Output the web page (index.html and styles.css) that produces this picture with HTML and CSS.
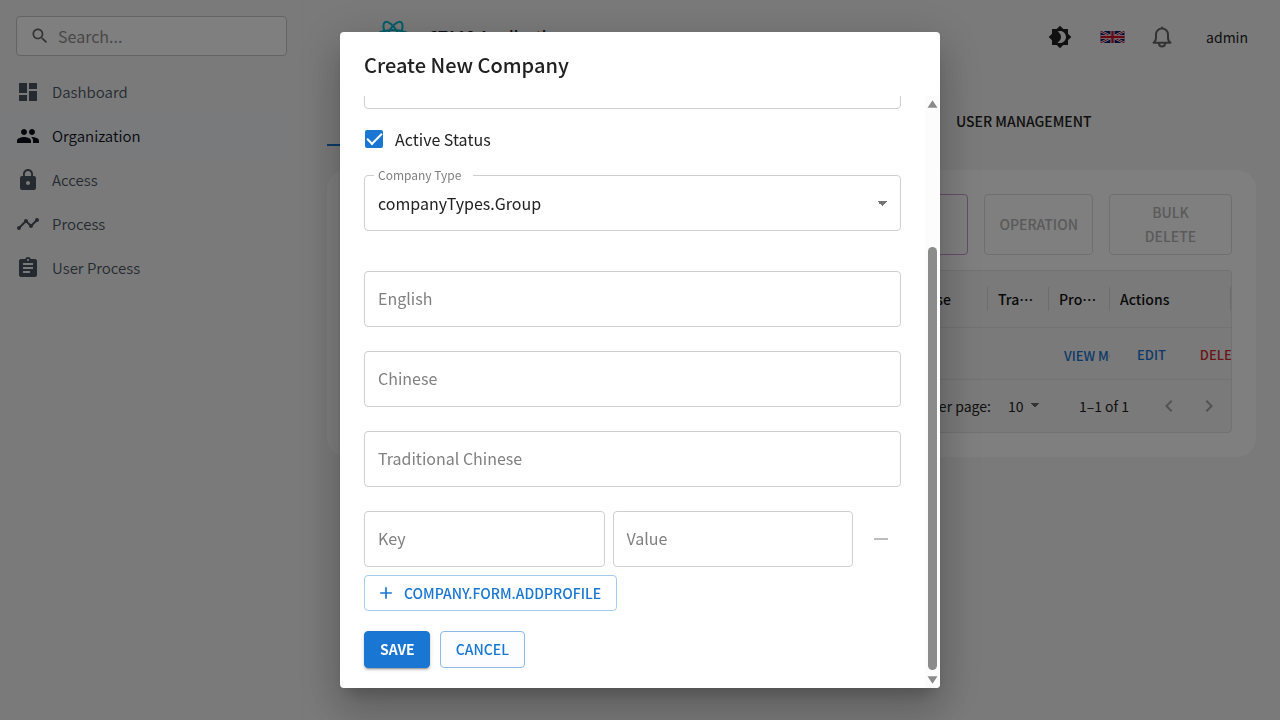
FILE: index.html
```html
<!DOCTYPE html>
<html lang="en">
<head>
<meta charset="utf-8">
<meta name="viewport" content="width=device-width, initial-scale=1">
<title>Organization</title>
<link rel="stylesheet" href="styles.css">
</head>
<body>
<div class="app">
  <aside class="sidebar">
    <label class="search">
      <svg class="search-icon" viewBox="0 0 24 24"><path d="M15.5 14h-.79l-.28-.27C15.41 12.59 16 11.11 16 9.5 16 5.91 13.09 3 9.5 3S3 5.91 3 9.5 5.91 16 9.5 16c1.61 0 3.09-.59 4.23-1.57l.27.28v.79l5 4.99L20.49 19zm-6 0C7.01 14 5 11.99 5 9.5S7.01 5 9.5 5 14 7.01 14 9.5 11.99 14 9.5 14"/></svg>
      <input type="text" placeholder="Search..." aria-label="Search">
    </label>
    <nav class="nav">
      <a class="nav-item" href="#"><svg viewBox="0 0 24 24"><path d="M3 13h8V3H3zm0 8h8v-6H3zm10 0h8V11h-8zm0-18v6h8V3z"/></svg>Dashboard</a>
      <a class="nav-item active" href="#"><svg viewBox="0 0 24 24"><path d="M16 11c1.66 0 2.99-1.34 2.99-3S17.66 5 16 5s-3 1.34-3 3 1.34 3 3 3m-8 0c1.66 0 2.99-1.34 2.99-3S9.66 5 8 5 5 6.34 5 8s1.34 3 3 3m0 2c-2.33 0-7 1.17-7 3.5V19h14v-2.500c0-2.330-4.670-3.500-7-3.500m8 0c-.29 0-.62.02-.97.05 1.160.84 1.970 1.970 1.970 3.450V19h6v-2.500c0-2.330-4.670-3.500-7-3.500"/></svg>Organization</a>
      <a class="nav-item" href="#"><svg viewBox="0 0 24 24"><path d="M18 8h-1V6c0-2.760-2.240-5-5-5S7 3.240 7 6v2H6c-1.100 0-2 .9-2 2v10c0 1.100.9 2 2 2h12c1.100 0 2-.9 2-2V10c0-1.100-.9-2-2-2m-6 9c-1.100 0-2-.9-2-2s.9-2 2-2 2 .9 2 2-.9 2-2 2m3.100-9H8.900V6c0-1.710 1.390-3.100 3.100-3.100s3.100 1.390 3.100 3.100z"/></svg>Access</a>
      <a class="nav-item" href="#"><svg viewBox="0 0 24 24"><path d="M23 8c0 1.100-.9 2-2 2-.18 0-.35-.02-.51-.07l-3.560 3.550c.05.16.07.34.07.52 0 1.100-.9 2-2 2s-2-.9-2-2c0-.18.02-.36.07-.52l-2.550-2.550c-.16.05-.34.07-.52.07s-.36-.02-.52-.07l-4.550 4.560c.05.16.07.33.07.51 0 1.100-.9 2-2 2s-2-.9-2-2 .9-2 2-2c.18 0 .35.02.51.07l4.560-4.550C8.020 9.360 8 9.180 8 9c0-1.100.9-2 2-2s2 .9 2 2c0 .18-.02.36-.07.52l2.550 2.550c.16-.05.34-.07.52-.07s.36.02.52.07l3.550-3.560C19.020 8.350 19 8.180 19 8c0-1.100.9-2 2-2s2 .9 2 2"/></svg>Process</a>
      <a class="nav-item" href="#"><svg viewBox="0 0 24 24"><path d="M19 3h-4.180C14.400 1.840 13.300 1 12 1s-2.400.84-2.820 2H5c-1.100 0-2 .9-2 2v14c0 1.100.9 2 2 2h14c1.100 0 2-.9 2-2V5c0-1.100-.9-2-2-2m-7 0c.55 0 1 .45 1 1s-.45 1-1 1-1-.45-1-1 .45-1 1-1m2 14H7v-2h7zm3-4H7v-2h10zm0-4H7V7h10z"/></svg>User Process</a>
    </nav>
  </aside>
  <main class="main">
    <header class="topbar">
      <div class="brand">
        <svg class="logo" viewBox="0 0 36 32"><g fill="none" stroke="#00bcd4" stroke-width="2"><ellipse cx="18" cy="16" rx="16" ry="6"/><ellipse cx="18" cy="16" rx="16" ry="6" transform="rotate(60 18 16)"/><ellipse cx="18" cy="16" rx="16" ry="6" transform="rotate(120 18 16)"/></g><circle cx="18" cy="16" r="3" fill="#00bcd4"/></svg>
        <span>CTA19 Application</span>
      </div>
      <div class="tools">
        <button class="tool theme" aria-label="Theme"><svg viewBox="0 0 24 24"><path d="M20 8.690V4h-4.690L12 .69 8.690 4H4v4.690L.69 12 4 15.310V20h4.690L12 23.310 15.310 20H20v-4.690L23.310 12zM12 18c-.89 0-1.740-.2-2.500-.55C11.560 16.500 13 14.420 13 12s-1.440-4.500-3.500-5.450C10.260 6.200 11.110 6 12 6c3.310 0 6 2.690 6 6s-2.690 6-6 6" fill-rule="evenodd"/></svg></button>
        <button class="tool" aria-label="Language"><svg class="flag" viewBox="0 0 24 12"><path fill="#012169" d="M0 0h24v12H0z"/><path stroke="#fff" stroke-width="2.400" d="m0 0 24 12M24 0 0 12"/><path stroke="#c8102e" d="m0 0 24 12M24 0 0 12"/><path stroke="#fff" stroke-width="4" d="M12 0v12M0 6h24"/><path stroke="#c8102e" stroke-width="2.400" d="M12 0v12M0 6h24"/></svg></button>
        <button class="tool bell" aria-label="Notifications"><svg viewBox="0 0 24 24"><path d="M3.500 17.800h17c-1.500-1-2.500-2.500-2.500-5V9.500a6 6 0 0 0-12 0v3.300c0 2.500-1 4-2.500 5zM9 18.500a3 3 0 0 0 6 0M12 1.800v2" fill="none" stroke="currentColor" stroke-width="2" stroke-linejoin="round"/></svg></button>
        <span class="user">admin</span>
      </div>
    </header>
    <div class="tabs">
      <button class="tab selected" aria-label="Company"></button>
      <button class="tab">USER MANAGEMENT</button>
    </div>
    <section class="card">
      <div class="actions">
        <button class="action purple" aria-label="Create"></button>
        <button class="action" disabled>OPERATION</button>
        <button class="action bulk" disabled>BULK DELETE</button>
      </div>
      <div class="grid">
        <table>
          <thead><tr><th class="rest"><span>Enterprise</span></th><th lang="zh-CN"><span>Tra…</span></th><th lang="zh-CN"><span>Pro…</span></th><th class="last"><span>Actions</span></th></tr></thead>
          <tbody><tr><td></td><td></td><td class="view"><button class="link">VIEW MORE</button></td><td class="ops"><div><button class="link">EDIT</button><button class="link red">DELETE</button></div></td></tr></tbody>
        </table>
        <div class="pager">
          <label for="rows">Rows per page:</label>
          <select id="rows"><option>10</option></select>
          <span class="range">1–1 of 1</span>
          <button aria-label="Previous page"><svg viewBox="0 0 24 24"><path d="M15.410 7.410 14 6l-6 6 6 6 1.410-1.410L10.830 12z"/></svg></button>
          <button aria-label="Next page"><svg viewBox="0 0 24 24"><path d="M10 6 8.590 7.410 13.170 12l-4.580 4.590L10 18l6-6z"/></svg></button>
        </div>
      </div>
    </section>
  </main>
</div>
<div class="backdrop">
  <div class="dialog" role="dialog" aria-labelledby="dialog-title">
    <h2 id="dialog-title">Create New Company</h2>
    <div class="dialog-body">
      <form class="form">
        <input class="field" type="text" aria-label="Description">
        <label class="check"><input type="checkbox" checked>Active Status</label>
        <fieldset class="select-box">
          <legend><label for="ctype">Company Type</label></legend>
          <select id="ctype"><option>companyTypes.Group</option></select>
        </fieldset>
        <div class="names">
          <input class="field" type="text" placeholder="English" aria-label="English">
          <input class="field" type="text" placeholder="Chinese" aria-label="Chinese">
          <input class="field" type="text" placeholder="Traditional Chinese" aria-label="Traditional Chinese">
        </div>
        <div class="pair">
          <input class="field" type="text" placeholder="Key" aria-label="Key">
          <input class="field" type="text" placeholder="Value" aria-label="Value">
          <button class="remove" type="button" disabled aria-label="Remove"><svg viewBox="0 0 24 24"><path d="M19 13H5v-2h14z"/></svg></button>
        </div>
        <button class="btn add" type="button"><svg viewBox="0 0 24 24"><path d="M19 13h-6v6h-2v-6H5v-2h6V5h2v6h6z"/></svg>COMPANY.FORM.ADDPROFILE</button>
        <div class="buttons">
          <button class="btn save" type="button">SAVE</button>
          <button class="btn cancel" type="button">CANCEL</button>
        </div>
      </form>
      <div class="scrollbar" aria-hidden="true">
        <svg viewBox="0 0 10 8"><path d="M5 1 9 7H1z"/></svg>
        <div class="track"><div class="thumb"></div></div>
        <svg viewBox="0 0 10 8"><path d="M5 7 1 1h8z"/></svg>
      </div>
    </div>
  </div>
</div>
</body>
</html>
```
FILE: styles.css
```css
* { box-sizing: border-box; }
html, body { height: 100%; }
body {
  margin: 0;
  overflow: hidden;
  background: #f5f5f5;
  color: #212121;
  font: 14px/24px "Noto Sans CJK SC", "Noto Sans", sans-serif;
}
button, input, select { font: inherit; color: inherit; margin: 0; }
button { border: 0; background: none; padding: 0; }
svg { fill: currentColor; flex: none; display: block; }

.app { display: flex; height: 100%; }

.sidebar { flex: none; width: 303px; padding: 16px 0 0; border-right: 1px solid #f0f0f0; }
.search {
  display: flex; align-items: center; gap: 8px;
  height: 40px; margin: 0 15px 14px 16px; padding: 0 13px;
  background: #fff; border: 1px solid #c8c8c8; border-radius: 4px;
}
.search-icon { width: 20px; height: 20px; color: #666; }
.search input { flex: 1; min-width: 0; border: 0; padding: 0; background: none; outline: 0; font-size: 16px; }
.search input::placeholder { color: #909090; opacity: 1; }
.nav-item {
  display: flex; align-items: center; gap: 12px;
  height: 44px; margin: 0 12px 0 0; padding: 0 16px;
  color: #4b5563; text-decoration: none; font-size: 15px; font-weight: 350;
}
.nav-item svg { width: 24px; height: 24px; }
.nav-item.active { color: #0b0f19; background: #f3f5f9; }

.main { flex: 1; min-width: 0; padding: 0 24px; }
.topbar { display: flex; align-items: center; justify-content: space-between; height: 74px; padding: 0 8px 0 48px; }
.brand { display: flex; align-items: center; gap: 17px; padding-bottom: 2px; font-size: 16px; font-weight: 500; }
.logo { width: 36px; height: 32px; }
.tools { display: flex; align-items: center; gap: 25px; }
.tool svg { width: 24px; height: 24px; }
.tool .flag { width: 25px; height: 12px; }
.theme { margin-right: 3px; }
.bell { color: #666; }
.user { margin-left: 7px; }

.tabs { display: flex; height: 72px; padding-top: 24px; margin-bottom: 24px; }
.tab { height: 48px; padding: 0 16px 2px; font-weight: 500; }
.tab.selected { width: 613px; border-bottom: 2px solid #1976d2; }

.card { padding: 24px; background: #fff; border-radius: 20px; }
.actions { display: flex; gap: 16px; justify-content: flex-end; margin-bottom: 15px; }
.action { min-height: 61px; padding: 5px 14px 6px; border: 1px solid #dedede; border-radius: 4px; color: #b5b5b5; font-weight: 500; }
.action.purple { width: 160px; border-color: #cf95d8; }
.action.bulk { width: 123px; padding: 5px 30px 6px; }

.grid { border: 1px solid #e4e4e4; border-radius: 4px; background: #f5f5f5; overflow: hidden; }
table { width: 100%; border-collapse: collapse; table-layout: fixed; }
th { height: 56px; padding: 0; text-align: left; font-weight: 500; color: #111; border-bottom: 1px solid #e4e4e4; width: 61px; }
th span { display: block; padding: 0 0 0 10px; border-right: 1px solid #dadada; white-space: nowrap; }
th.rest { width: auto; text-align: right; }
th.rest span { padding-right: 36px; }
th.last { width: 121px; }
td { height: 52px; padding: 4px 0 0; border-bottom: 1px solid #e4e4e4; overflow: hidden; white-space: nowrap; }
.view { padding-left: 15px; }
.ops div { display: flex; gap: 34px; padding-left: 27px; }
.link { color: #1976d2; font-size: 13px; font-weight: 500; }
.red { color: #d32f2f; }
.pager { display: flex; align-items: center; justify-content: flex-end; height: 52px; padding-right: 2px; }
.pager select {
  appearance: none; width: 36px; margin: 0 35px 0 17px; padding: 0; border: 0;
  background: linear-gradient(to bottom left, #666 50%, transparent 50%) no-repeat right 9px center / 5px 5px,
    linear-gradient(to bottom right, #666 50%, transparent 50%) no-repeat right 4px center / 5px 5px;
}
.range { margin-right: 20px; }
.pager button { width: 40px; display: flex; justify-content: center; color: #a6a6a6; }
.pager svg { width: 24px; height: 24px; }

.backdrop {
  position: fixed; inset: 0; z-index: 10; padding: 32px;
  display: flex; justify-content: center; background: rgba(0, 0, 0, .5);
}
.dialog {
  display: flex; flex-direction: column; width: 100%; max-width: 600px;
  background: #fff; border-radius: 4px; overflow: hidden;
  box-shadow: 0 11px 15px -7px rgba(0, 0, 0, .2), 0 24px 38px 3px rgba(0, 0, 0, .14), 0 9px 46px 8px rgba(0, 0, 0, .12);
}
h2 { margin: 0; padding: 17px 24px 15px; font-size: 20px; line-height: 32px; font-weight: 500; }
.dialog-body { flex: 1; min-height: 0; display: flex; }
.form {
  flex: 1; min-width: 0; padding: 0 24px 20px; overflow: hidden;
  display: flex; flex-direction: column; justify-content: flex-end; align-items: stretch;
}
.form > * { flex: none; }
.field {
  width: 100%; height: 56px; padding: 0 13px 2px; border: 1px solid #cfcfcf; border-radius: 4px;
  background: #fff; outline: 0; font-size: 16px;
}
.field::placeholder { color: #808080; opacity: 1; }
.check { display: flex; align-items: center; gap: 12px; height: 60px; padding-bottom: 1px; font-size: 16px; }
.check input {
  appearance: none; width: 18px; height: 18px; margin-left: 1px; border-radius: 2px; background: #1976d2;
  display: grid; place-items: center;
}
.check input::before { content: ""; width: 13px; height: 6px; margin-top: -4px; border: solid #fff; border-width: 0 0 2px 2px; transform: rotate(-45deg); }
.select-box { margin: 0 0 40px; padding: 0 13px 0 9px; height: 62px; border: 1px solid #cfcfcf; border-radius: 4px; min-width: 0; }
legend { padding: 0 12px 0 4px; height: 12px; line-height: 12px; font-size: 12px; color: #808080; }
.select-box select {
  appearance: none; display: block; width: 100%; height: 44px; padding: 0 4px; border: 0; outline: 0; font-size: 16px;
  background: linear-gradient(to bottom left, #757575 50%, transparent 50%) no-repeat right 5px center / 5px 5px,
    linear-gradient(to bottom right, #757575 50%, transparent 50%) no-repeat right 0 center / 5px 5px;
}
.names { display: flex; flex-direction: column; gap: 24px; margin-bottom: 24px; }
.pair { display: flex; align-items: center; gap: 8px; margin-bottom: 8px; }
.pair .field { flex: 1; min-width: 0; }
.remove { width: 40px; display: flex; justify-content: center; color: #bdbdbd; }
.remove svg { width: 24px; height: 24px; }
.btn { height: 36px; padding: 0 15px; border: 1px solid #a6caf0; border-radius: 4px; color: #1976d2; font-weight: 500; }
.add { align-self: flex-start; display: flex; align-items: center; gap: 8px; margin-bottom: 20px; padding-left: 11px; }
.add svg { width: 20px; height: 20px; }
.buttons { display: flex; gap: 10px; }
.buttons .btn { height: 37px; padding-bottom: 1px; }
.btn.save { padding: 0 14px 1px 15px; color: #fff; font-weight: 700; background: #1976d2; border-color: #1976d2; box-shadow: 0 3px 1px -2px rgba(0, 0, 0, .2), 0 2px 2px 0 rgba(0, 0, 0, .14), 0 1px 5px 0 rgba(0, 0, 0, .12); }
.btn.cancel { background: #fbfdff; border-color: #8cbbe9; }

.scrollbar { flex: none; width: 15px; padding: 3px 0; background: #fcfcfc; display: flex; flex-direction: column; align-items: center; gap: 5px; }
.scrollbar svg { width: 13px; height: 10px; color: #8b8b8b; }
.track { flex: 1; width: 9px; display: flex; align-items: flex-end; }
.thumb { width: 100%; height: 76%; border-radius: 5px; background: #8b8b8b; }
```
